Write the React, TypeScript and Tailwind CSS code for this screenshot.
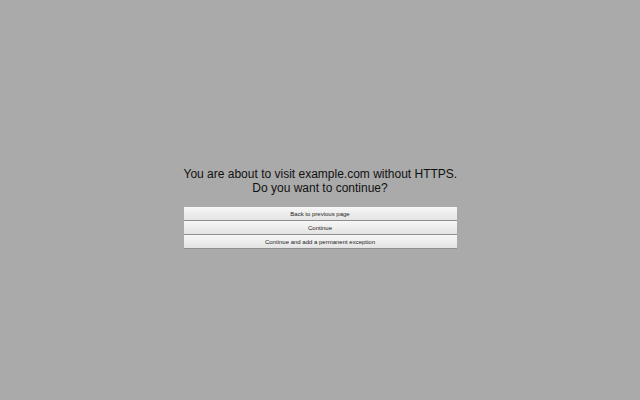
export default function App() {
  const buttons = [
    "Back to previous page",
    "Continue",
    "Continue and add a permanent exception",
  ];

  return (
    <div
      className="w-[640px] h-[400px] bg-[#aaaaaa] flex justify-center"
      style={{ fontFamily: '"Liberation Sans", Arial, sans-serif' }}
    >
      <div className="w-[273px] pt-[167px]">
        <h1 className="text-[12px] leading-[14px] text-[#111111] text-center font-normal whitespace-nowrap">
          You are about to visit example.com without HTTPS.
          <br />
          Do you want to continue?
        </h1>
        <div className="mt-[12px] flex flex-col gap-[1px]">
          {buttons.map((label) => (
            <button
              key={label}
              className="h-[13px] w-full bg-gradient-to-b from-[#f7f7f7] to-[#e3e3e3] shadow-[0_1px_0_#8f8f8f] text-[6px] leading-[14px] text-[#222222] text-center"
            >
              {label}
            </button>
          ))}
        </div>
      </div>
    </div>
  );
}
